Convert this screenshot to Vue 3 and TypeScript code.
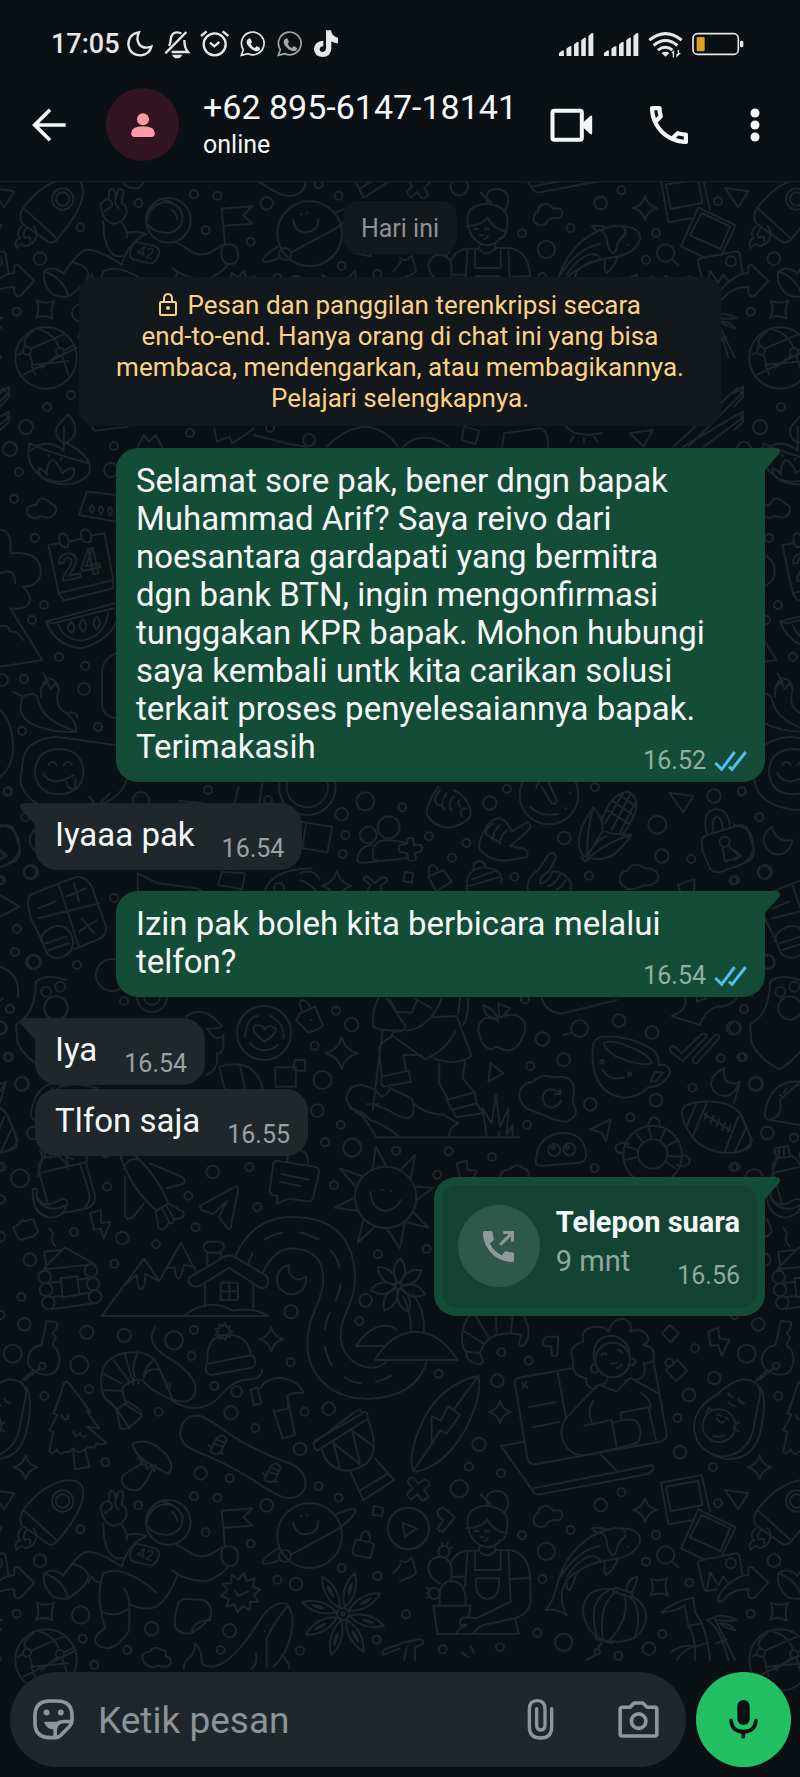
<script setup lang="ts">
interface Message {
  id: number
  side: 'in' | 'out'
  text: string
  time: string
  tail: boolean
}

const messages: Message[] = [
  {
    id: 1,
    side: 'out',
    text: 'Selamat sore pak, bener dngn bapak Muhammad Arif? Saya reivo dari noesantara gardapati yang bermitra dgn bank BTN, ingin mengonfirmasi tunggakan KPR bapak. Mohon hubungi saya kembali untk kita carikan solusi terkait proses penyelesaiannya bapak. Terimakasih',
    time: '16.52',
    tail: true,
  },
  { id: 2, side: 'in', text: 'Iyaaa pak', time: '16.54', tail: true },
  { id: 3, side: 'out', text: 'Izin pak boleh kita berbicara melalui telfon?', time: '16.54', tail: true },
  { id: 4, side: 'in', text: 'Iya', time: '16.54', tail: true },
  { id: 5, side: 'in', text: 'Tlfon saja', time: '16.55', tail: false },
]

/* ---------- wallpaper doodles ---------- */

type Dot = [number, number, number]

interface Sheet {
  transform: string
  paths: string[]
  dots: Dot[]
}

const star = (cx: number, cy: number, r: number): string => {
  const k = r * 0.2
  return `M${cx} ${cy - r}Q${cx + k} ${cy - k} ${cx + r} ${cy}Q${cx + k} ${cy + k} ${cx} ${cy + r}Q${cx - k} ${cy + k} ${cx - r} ${cy}Q${cx - k} ${cy - k} ${cx} ${cy - r}z`
}

const burst = (cx: number, cy: number, outer: number, inner: number, points: number): string => {
  const list: string[] = []
  for (let i = 0; i < points * 2; i++) {
    const r = i % 2 ? inner : outer
    const a = (Math.PI * (i + 0.5)) / points
    list.push(`${(cx + r * Math.sin(a)).toFixed(1)} ${(cy - r * Math.cos(a)).toFixed(1)}`)
  }
  return `M${list.join('L')}z`
}

const petals = (cx: number, cy: number, from: number, to: number, width: number, count: number, turn: number): string => {
  let d = ''
  for (let i = 0; i < count; i++) {
    const a = turn + (2 * Math.PI * i) / count
    const ux = Math.cos(a)
    const uy = Math.sin(a)
    const at = (r: number, w: number) => `${(cx + ux * r - uy * w).toFixed(1)} ${(cy + uy * r + ux * w).toFixed(1)}`
    const mid = (from + to) / 2
    d += `M${at(from, 0)}Q${at(mid, width)} ${at(to, 0)}Q${at(mid, -width)} ${at(from, 0)}z`
  }
  return d
}

const sheets: Sheet[] = [
  {
    transform: 'translate(0 1140) scale(.3333)',
    paths: [
      'M115 100L260 66V40M118 100Q110 70 130 55M118 100L145 195M258 66Q270 120 285 165Q288 200 250 208L190 218M240 72L268 160Q272 185 255 200M195 40L205 75M200 50l20 8M120 30q2 24 20 20',
      'M98 147h14l-3 20Q130 210 175 182Q195 170 202 185Q195 235 145 232Q95 220 98 147M110 175Q140 225 200 195',
      'M40 262l20-12 6-10 8 4 20-6 6 2 14 34-12 14-40 12q-12-8-22-38z',
      'M270 220l33-10v38l28-2-20 50-8-30-20 4z',
      'M362 50Q375 30 410 50Q480 120 505 190L470 212Q395 150 362 50zM372 88Q380 50 420 60M375 110V225Q380 245 400 230L432 190M450 70L545 110Q560 120 550 132L500 145M467 212L475 262Q485 275 495 265L505 250M505 190L550 215Q555 230 540 235L520 238M485 205L510 250Q525 250 522 235L500 200',
      'M600 198L706 140Q716 138 714 150L692 265Q684 270 680 262L657 230L682 182L640 222L603 210z',
      'M830 62l115 18q14 4 12 18L940 172q-4 14-18 12L868 176 830 190 832 168 820 166q-12-4-11-14L820 72q2-10 10-10zM845 103L927 119M840 126L900 138M862 62Q862 30 895 30Q925 30 925 75',
      'M1118 90L1127 20L1160 80M1085 108L1020 86L1065 138M1065 172L1005 203L1075 213M1090 240L1073 308L1122 262M1160 265L1200 325L1215 245M1200 92L1245 45L1232 120M1248 140L1300 143L1250 180M1238 215L1285 263L1215 245M1112 155Q1115 210 1157 212Q1190 210 1202 180M1146 149h2M1172 153h2',
      'M132 385L195 322L287 375M132 335l50-5M132 335L140 385M148 265q16 14 8 26q-4 10 10 28M132 388L262 375M152 428L180 426M234 420L262 414M158 470L186 468M238 462L268 458M155 507L290 489M182 415l50-6 6 55-50 8z',
      'M305 528L432 356L478 423L543 308L588 395M380 430L410 405q2 40 12 42q14-2 14-45L478 423L500 385L525 382Q525 415 537 415Q545 410 552 375L585 380M305 528H805M552 528Q620 470 700 512Q760 500 805 528',
      'M615 435V500M760 435V505M572 410L660 358Q688 335 716 358L800 408Q812 430 795 443Q785 448 775 440L687 383L600 438Q575 445 566 425Q564 415 572 410zM662 428h52v52h-52zM688 428v52M662 454h52M622 375V340M662 355V340M630 338Q608 335 611 318Q615 305 630 305H655Q672 306 672 320Q670 336 655 338z',
      'M708 345Q760 230 880 230Q1065 235 1065 420Q1065 460 1030 540Q1010 600 1040 645Q1075 685 1120 683Q1145 680 1160 665M788 400Q820 325 880 325Q970 330 970 420Q970 450 945 510Q905 600 935 680Q985 777 1105 777Q1250 770 1280 665',
      'M792 300q25-18 55-22M900 277q30 8 55 20M992 332q20 20 26 48M1022 432q-2 20-15 48M990 517q-12 25-15 50M975 620q5 30 20 55M1033 712q20 15 50 18M1128 725q25-5 45-18M757 340l-12 30',
      'M868 375A44 44 0 1 0 918 410Q885 430 868 400Q864 388 868 375z',
      'M1068 618H1150M1068 618Q1110 555 1160 557Q1180 558 1190 570M1125 660H1372Q1320 575 1245 575Q1170 580 1125 660z',
      'M1210 470Q1235 520 1233 575M1240 465Q1275 510 1272 578',
      petals(1195, 438, 8, 84, 34, 7, 0.3),
      'M140 543l30 3q4 6-2 20l-10 15 10 12-8 14q-4 12 6 16Q185 645 175 680Q165 708 130 704Q80 690 84 655Q90 620 125 615zM120 685L75 720M100 690L65 722',
      'M305 750Q290 640 400 637Q460 635 480 690L520 782Q470 760 440 735Q420 700 370 740Q365 765 380 790L350 806Q310 780 305 750M305 750L365 752M308 700L365 730M340 660L385 720M375 642L395 715M415 638Q390 680 405 710M465 660Q430 680 432 715M480 690Q440 680 432 715M385 715v18M400 715v18M415 718v14',
      'M465 562Q435 610 500 650Q600 710 585 760Q570 800 510 775M520 785Q600 830 660 770Q700 715 760 718Q785 710 787 690',
      'M620 672L750 646Q765 648 766 665Q766 680 755 683L632 705Q618 702 617 685Q617 675 620 672zM622 665Q620 590 672 585Q740 580 752 640',
      burst(671, 575, 26, 16, 9),
      star(814, 598, 36),
      'M752 750l20-8 12 48-22 6zM780 745Q800 710 850 715Q900 725 910 760Q880 755 862 768L865 806M165 812L192 730Q200 720 208 732L270 812',
    ],
    dots: [
      [1157, 172, 92], [134, 411, 19], [138, 449, 19], [145, 488, 19], [273, 392, 19], [279, 432, 19], [285, 470, 19],
      [127, 678, 10], [505, 738, 6], [710, 755, 16], [60, 115, 27], [5, 80, 12], [3, 178, 12], [317, 40, 12], [322, 140, 12],
      [638, 96, 19], [748, 81, 12], [975, 7, 12], [1057, 22, 27], [1188, 33, 12], [565, 167, 12], [1002, 136, 12],
      [772, 201, 12], [587, 262, 12], [222, 276, 12], [367, 294, 19], [90, 359, 19], [468, 313, 12], [343, 371, 12],
      [64, 471, 12], [0, 290, 15], [2, 525, 12], [1134, 343, 12], [1097, 481, 19], [1078, 543, 12], [873, 515, 20],
      [73, 553, 19], [260, 577, 20], [373, 586, 20], [522, 601, 27], [582, 570, 12], [575, 648, 12], [38, 641, 27],
      [238, 675, 27], [267, 748, 12], [133, 768, 12], [643, 738, 12], [872, 667, 12], [1280, 327, 12],
    ],
  },
  {
    transform: 'translate(400 1310) scale(.3333)',
    paths: [
      'M210 15Q180 50 188 105Q190 120 200 125Q195 150 225 160Q240 168 250 155L240 130Q250 90 290 75Q330 65 365 75Q352 100 362 108Q370 110 380 95Q395 60 370 15M190 62L250 100M225 15L270 88M287 0L290 72M340 0L332 72M200 125L240 130M210 15Q240-30 290-35Q340-30 370 15',
      'M475 80H440Q425 90 430 105Q440 112 455 108V135Q465 142 472 135z',
      'M590 235Q560 240 558 205Q510 195 520 150Q500 110 550 95Q540 55 585 50Q620 50 625 65Q640 20 675 28Q700 40 690 65Q735 50 745 85Q745 100 730 105Q770 110 760 150Q745 165 730 158Q745 200 710 210',
      'M582 150Q575 80 635 77Q690 85 690 145M580 162q-15 15 0 25q15 2 15-8M690 145q20 0 15 15q-10 10-20 5M632 160q8 3 18-2M650 175q10-2 14-10M605 135q8-8 14-2M652 120q10 0 14 8',
      'M622 205L618 220L590 228M690 205L650 245L600 225M675 212L695 205L778 252M515 175L355 203Q342 208 345 222L382 445Q388 465 405 463L780 395Q802 390 800 370L760 150M472 182L498 322M365 218l18 16M367 234l12-18M385 292l82-15M397 352l80-15',
      'M590 228L497 325Q475 360 490 395Q510 440 560 435L650 415M580 272Q560 300 575 335M552 347L635 330L650 412M635 340Q690 320 710 335Q730 360 715 395Q700 405 650 415M665 330L662 308L745 292L768 390M722 248Q755 270 752 295',
      'M372 395L303 408L400 545Q405 555 420 553L740 493Q765 485 758 465L400 535M600 430L652 485',
      'M235 198Q250 260 190 370Q120 480 40 485Q20 430 75 320Q130 220 235 198zM235 198L160 300M40 482L95 402V318L122 332L145 288L180 315L140 370L120 362L95 402',
      'M810 45L836 70L812 97L786 70zM925 65L955 53L958 85L988 90L965 138L955 105L932 108zM798 180L832 150L862 182L828 214z',
      'M1030 208Q1085 210 1080 260Q1070 300 1060 360Q1040 435 965 440Q885 425 882 350Q885 290 950 255Q990 215 1030 208zM1080 230Q1105 270 1080 370Q1060 445 990 447Q960 447 940 435M940 378q18 6 34-2M950 325q15 20 22 10M985 250q5 12 15 10M985 275q5 12 20 12M1015 265q5 15 18 14M950 316q8-4 14 2M975 322q8 2 10 8M918 310l8-16 10 6M1000 350l16-14M1002 356l14 8',
      star(300, 306, 34), star(735, 600, 36),
      'M40 503L55 520L75 508Q90 515 88 525L72 540L85 560Q75 575 65 570L52 552L35 568Q20 560 22 550L38 535L22 515Q30 500 40 503z',
      'M8 638L50 655L15 680zM112 605Q120 590 135 597L165 622L130 663Q118 668 113 655L130 630Q112 622 112 605z',
      'M262 585Q250 545 290 542Q325 545 325 580Q322 600 315 605M242 553l30 30M205 655Q190 590 262 587Q330 595 322 650Q318 690 300 692M205 655Q215 705 262 712Q290 710 300 690M198 655H205Q250 650 262 628Q280 665 320 670M222 665q8-5 14 0M255 665q8-5 12 0M240 680q5 4 12 0M252 693q10 0 12-10M240 710L235 722Q262 750 288 720L285 712',
      'M235 722H205Q165 725 152 760M288 720H330Q385 730 390 800L392 870Q390 910 345 925L250 945Q230 955 222 970M203 722L195 830M325 722L332 875L230 925L190 922Q175 930 182 945L200 945Q175 955 170 968M225 722V780H302V722M228 805H297V830Q290 867 262 867Q230 862 228 830zM330 808L392 803M155 800H195M345 925L357 972H112L100 887H212L205 922',
      'M120 885Q110 815 155 813Q200 815 197 885M120 820Q80 800 86 765Q95 740 120 740Q155 745 155 780Q155 810 150 815M126 706v-8M140 706l4-8M148 716l8-4M88 838l-8-4M86 850h-8M88 860l-8 4',
      'M402 640Q398 615 415 610Q412 592 435 588Q455 590 460 603Q485 595 487 615Q485 635 460 630Q440 635 437 648Q415 658 402 640z',
      'M435 900Q460 880 475 810Q520 680 640 655Q720 650 720 690Q715 730 655 745Q550 760 500 810Q470 860 500 915Q475 895 435 900zM590 668L575 655Q600 650 622 660M475 810Q530 720 600 708M600 665Q625 680 622 710Q640 755 650 720Q650 700 675 680Q680 665 670 658M655 745Q640 780 620 795Q610 790 615 757M500 820Q500 842 510 840Q525 810 530 790Q560 760 600 755Q600 735 565 740Q530 755 500 800M683 710h2',
      'M645 833L700 850L692 862L640 845zM680 842Q680 805 712 800Q712 815 695 848M640 838Q550 830 549 905Q560 970 610 990Q660 1005 710 980Q755 930 730 890Q715 865 692 858M650 845Q595 880 608 988M672 852Q695 920 625 995M630 840Q560 870 590 975M690 860Q730 900 705 980M585 975L590 988L635 1000L642 992M605 998L592 1018M592 1033L560 1050',
      'M783 518L905 495L930 605M783 518L805 643L880 630M798 530L895 513L907 585L812 603zM895 598L1007 652L965 740M895 598L843 715L915 750M905 615L990 655L962 723L870 682zM895 765Q890 755 905 750L1010 730Q1020 732 1020 745L1028 795M895 765L912 838Q920 848 935 840L950 838M920 842L930 788L955 825L970 800L985 818',
      'M955 875Q950 840 1020 800Q1035 795 1045 795V775Q1055 765 1065 780L1105 818L1065 862Q1050 870 1045 855V838Q1010 835 985 855Q965 880 955 875z',
      'M975 540L1045 550L1015 598zM817 755l18 18M752 806Q777 818 802 804Q790 830 804 856Q777 845 752 856Q765 830 752 806z',
      'M785 907Q820 875 880 863L885 905L905 940L865 948L855 890M785 907Q830 905 855 885M865 945Q890 990 885 1050M905 940Q925 990 930 1050M920 930Q960 950 985 1050M945 925Q970 980 1005 1050M920 930L945 922M950 918Q980 915 1010 930Q980 935 955 930M960 940Q990 940 1005 960Q975 955 960 940M815 1025Q850 1000 880 1010Q850 1020 830 1050M885 1010L925 998M950 1000l30-12',
      'M0 750Q20 765 35 742L48 785Q45 800 20 805L0 815M185 1028l20 14M212 1008l10 22M0 1000l60-12q14 2 8 14L45 1012V1050M20 1010l-8 40',
    ],
    dots: [
      [638, 150, 52], [808, 158, 12], [957, 347, 49], [25, 655, 62], [132, 725, 17], [103, 850, 17], [592, 1025, 8], [993, 760, 15],
      [304, 127, 12], [386, 152, 12], [292, 212, 19], [116, 191, 12], [237, 403, 20], [207, 470, 12], [303, 490, 12],
      [178, 536, 26], [885, 115, 12], [867, 255, 19], [832, 324, 12], [840, 427, 19], [939, 471, 12], [943, 204, 19],
      [664, 547, 12], [602, 585, 19], [512, 660, 12], [366, 676, 12], [439, 724, 26], [768, 675, 12], [738, 755, 12],
      [954, 580, 12], [868, 818, 12], [427, 807, 12], [412, 969, 12], [491, 997, 26], [787, 972, 12], [747, 1016, 19],
      [655, 1037, 12], [18, 913, 12], [128, 1018, 12], [300, 1012, 12], [797, 735, 26],
    ],
  },
  {
    transform: 'translate(0 1400) scale(.3333)',
    paths: [
      'M820 30L848 115L885 105L862-12M822 35L865 25',
      'M175 0L160 40 172 45 148 90 160 95 148 155Q160 165 170 148Q180 170 195 155Q210 160 220 145Q235 165 250 150Q260 145 270 140Q285 150 290 130Q305 135 320 130L262 80 298 85 260 35 270 38L245 0M220 155L225 208L268 200L255 150M185 45q5 18 20 10v-12M220 95q8 25 20 5q10 20 20 5',
      star(77, 202, 36),
      'M93 752L190 710M55 770L70 762M94 800L105 830M88 768L98 800M98 800L205 790M100 700Q60 730 80 745M105 692Q160 700 178 750M192 758L222 742M70 830L230 750M125 810L172 772M186 772L205 830',
      'M70 330Q55 350 65 375L145 432Q160 438 175 420Q260 320 248 265Q240 235 190 242Q120 260 70 330zM70 330L172 422M65 385Q45 405 60 420Q40 430 50 450Q65 430 75 445Q105 440 110 410Q110 395 100 385M80 390Q65 410 75 420Q95 410 90 430',
      'M398 130Q450 110 500 165Q525 200 505 222Q490 215 430 180Q400 155 398 130zM425 190L370 225Q360 240 372 258Q390 275 415 270Q440 250 455 210M412 175l15 8-8 12 18-2 4 15 14-12 8 18 4-20',
      'M540 105Q545 40 600 48Q625 55 700 110Q780 160 870 190Q925 215 915 265Q895 305 845 290Q810 275 760 240Q680 190 585 152Q545 135 540 105z',
      'M632 150L652 112Q668 98 680 118L662 158Q645 168 632 155zM640 130l30 10M648 118l28 10M626 136l12 8M658 158l12 4M794 234L814 196Q830 182 842 202L824 242Q807 252 794 239zM802 214l30 10M810 202l28 10M788 220l12 8M820 242l12 4',
      'M325 0Q345 20 350 30L362 88L385 85L425 50Q425 30 410 22L375 0M350 30L378 8M375 12L425 45M352 30L388 85',
      'M940 130L1070 32Q1085 28 1085 38L1098 35Q1112 55 1095 62L955 150Q945 155 940 130zM945 122L1085 42M965 148Q980 205 1035 212Q1075 210 1100 190Q1140 150 1105 60M1000 125L1020 208M1000 130L1080 192L1057 92L1122 140M1050 212L1090 300L1182 240L1125 175M1080 272L1165 220',
      'M305 335Q295 320 310 310Q320 300 325 305L328 280Q335 265 345 280L348 300L355 275Q370 268 370 285L365 315Q380 320 380 345Q370 375 340 377Q310 370 305 335zM325 305q14 2 10 20l-20 14M348 300q-8 14 8 30',
      'M440 375Q445 320 495 312Q545 318 548 358Q545 400 500 405Q455 402 440 375M480 303Q530 310 548 350M515 335Q530 345 532 365',
      'M310 370Q310 460 350 475H372M365 375Q385 400 380 420M380 405Q410 398 440 408Q385 430 365 500Q300 455 260 455Q235 460 190 527Q160 500 133 520Q125 560 160 590Q180 600 205 595Q260 560 265 530Q260 500 215 492M133 520Q190 540 205 595M265 548L275 530Q285 545 300 548M300 610Q295 560 310 520Q340 505 380 520Q430 540 468 577M372 565Q390 590 388 630V690Q360 740 320 745Q285 740 285 718Q290 700 315 685Q305 650 300 610M305 635Q345 655 388 625M388 612Q430 635 470 620Q510 590 532 525M518 512Q560 545 620 543Q660 530 685 500M525 432Q560 450 575 462Q610 480 645 455L668 440',
      'M668 445Q690 430 710 450Q720 480 705 495Q680 505 668 485Q660 465 668 445zM675 438L665 332L757 325L730 352L757 377L672 383',
      'M412 432L460 443Q480 450 478 465L470 483Q462 498 445 495L402 485Q386 478 390 462L396 446Q402 430 412 432z',
      'M560 597L610 600Q640 615 632 650Q620 670 575 700Q540 705 525 680Q522 650 535 610Q545 595 560 597zM575 700Q580 660 632 660',
      burst(722, 578, 60, 40, 10),
      'M705 572l10 16 30-14',
      'M1003 345Q1060 320 1068 330Q1065 350 1010 390L875 463M838 443Q785 475 788 490Q800 495 835 482M880 367Q885 403 918 403Q955 400 955 363M902 349h2M920 345h2',
      'M1068 418L1115 428Q1122 432 1120 440L1112 475L1062 465Q1056 460 1058 450zM1083 420Q1082 393 1098 394Q1114 398 1108 425M1122 318l28 6-4 24-28-4z',
      petals(1029, 642, 20, 128, 32, 8, 0.28),
      petals(1029, 642, 60, 95, 5, 8, 0.28),
      'M780 660Q820 600 860 612Q885 640 875 690Q865 760 820 800M862 620Q820 670 800 715V800M780 660Q700 790 640 800Q600 800 605 780Q605 750 585 730Q585 765 565 775Q550 790 552 806M767 760Q775 790 755 806M845 765Q870 790 868 806M794 692v2',
      'M430 785Q420 755 450 755Q460 735 485 750Q505 750 495 768Q520 775 510 795Q495 805 475 797Q450 810 430 785z',
      'M110 608Q134 620 163 608Q150 635 158 662Q134 648 108 660Q122 635 110 608z',
      'M1150 765l50-20M1150 765q-6-14 6-18l44-14M1180 520q20-20 22-30',
    ],
    dots: [
      [188, 303, 32], [188, 303, 20], [505, 367, 67], [929, 407, 97], [855, 468, 18], [1029, 642, 18], [1029, 642, 5], [138, 780, 92],
      [81, 758, 12], [180, 762, 12], [476, 35, 12], [693, 38, 20], [766, 84, 12], [914, 35, 12], [986, 26, 19], [900, 147, 19],
      [602, 220, 19], [689, 235, 12], [956, 259, 12], [1016, 293, 12], [316, 187, 12], [415, 316, 12], [582, 289, 12],
      [652, 293, 12], [800, 316, 19], [241, 388, 12], [617, 397, 12], [752, 431, 12], [120, 482, 19], [832, 539, 12],
      [888, 552, 19], [1025, 504, 12], [1132, 528, 12], [50, 641, 12], [242, 645, 26], [455, 686, 20], [689, 692, 20],
      [248, 716, 12], [382, 750, 12], [662, 750, 12], [900, 752, 12], [1130, 719, 12], [283, 795, 12],
    ],
  },
  {
    transform: 'translate(300 780) scale(.3333)',
    paths: [
      'M0 125L97 140L82 217L8 205L18 128M0 280Q40 262 60 300M0 300Q30 310 50 335',
      'M415 20Q380 70 380 100Q400 145 455 142Q515 125 512 95Q505 50 460 30M412 75Q396 58 420 30M435 88Q415 75 440 40M412 75q14 0 22 12M455 90Q440 75 460 50M480 80Q470 65 480 60M485 108Q475 85 500 85',
      'M710 25Q705 10 730 0M725 20L755 70Q770 75 770 60L745 5M809 39h3M795 85h3M690 80Q720 112 775 102',
      'M880 82Q830 150 838 200Q842 230 862 232Q900 245 940 225Q965 205 995 165Q950 165 915 155M880 82Q915 120 908 155Q890 180 865 225M880 82Q860 150 862 225M862 225Q890 180 920 168M845 232l10 12 12-8M995 165Q930 180 870 230M905 125Q930 40 985 35Q1015 50 1008 90Q990 140 970 158M920 90L985 130M940 65L1000 105M960 45L1008 80M990 45L935 150M970 40L915 130M1005 70L960 158',
      'M555 150Q530 190 540 210Q580 250 630 240L680 232Q690 210 665 205L630 198Q680 160 692 140Q690 120 675 130L635 155Q620 120 600 115Q570 115 555 150M560 165Q550 150 580 130M560 165q10 2 18 13M580 178Q575 160 600 135M580 178q10 0 20 14M600 190Q600 170 620 150',
      'M683 335Q680 290 715 270L745 225Q765 210 768 235L745 275Q720 290 720 310M755 275Q790 270 815 310L810 335M720 310q18 4 35-30M745 318q20-4 36-36M770 328q14-4 28-28',
      'M172 240Q175 200 215 195M220 235Q210 180 265 180Q310 185 318 190M172 240Q175 250 190 248L320 235M220 235q0 8 12 6',
      'M322 180Q325 170 340 175L342 195L362 195Q372 205 362 215L345 220L348 238Q335 248 325 240L322 220L300 215Q292 205 300 195L320 192z',
      'M1205 185Q1205 170 1220 165L1320 135Q1335 135 1342 145L1362 205Q1365 230 1345 245L1265 275Q1240 280 1230 265L1208 215zM1220 160Q1205 95 1245 88Q1285 85 1290 140M1240 155Q1235 112 1250 110Q1265 112 1268 145M1268 199L1275 245L1318 230L1284 196',
      'M1415 140Q1385 165 1392 190Q1410 230 1445 222Q1475 210 1477 180Q1430 190 1415 140z',
      'M960 305Q955 275 982 272Q1000 240 1035 265Q1075 265 1075 295Q1065 320 1030 315Q985 345 960 305zM1108 38L1180 48L1150 97z',
      'M385 290L430 270L455 305L408 334zM388 284Q380 255 400 255Q412 260 415 275M500 320Q500 265 555 262Q600 270 603 290L500 320q-2 10 10 15M603 290q5 10 0 18M520 268q0-25 20-25q18 5 15 20M515 298L590 272M315 275l25 5-5 28-25-5z',
      star(110, 318, 45),
      'M200 335L212 315L190 298Q195 285 205 292L225 310L245 292Q262 290 262 303L240 318L248 335M1133 315L1183 298V335M1133 315l8 20',
      'M235 655Q215 690 220 740Q240 755 310 750Q320 740 315 735L260 655M270 660L290 695L335 698L352 660M345 655L395 685M425 655Q400 720 350 745L318 752M395 712L470 708L515 828Q470 860 400 835M480 655L475 700M505 655Q505 715 490 735M465 755Q440 810 375 838L275 765Q280 750 305 755M248 750L218 990M200 973H235M275 770Q235 790 238 810L245 890M310 825L318 872M310 825H365M245 890L325 872L333 905L250 920Q240 915 245 890z',
      'M418 850V910L445 960M495 842L488 895L525 938M440 960L525 937L530 970L455 990zM458 992L468 1010M530 970L550 1000L470 1012M270 922Q265 945 245 950Q220 920 185 915Q140 915 140 960Q150 990 190 1010L230 1072M270 925L335 955Q350 1000 330 1012Q310 1020 265 990L225 975M340 970Q370 1000 430 1005L475 1030Q445 1045 448 1070M550 1000L560 1070M150 985Q190 995 210 1020Q250 1030 300 1072M228 1072H658M560 1070L548 985L575 1030L588 945L600 1040L625 985L620 1065L638 1035V1068M598 1055V1070',
      'M592 720Q540 700 535 750Q545 805 575 808Q590 795 600 805Q630 820 650 800Q680 765 675 730Q655 690 600 712M595 725Q590 690 550 675Q550 710 590 715M597 712L595 670L630 685L605 712',
      'M878 800Q885 770 910 770Q990 765 1060 810Q1080 830 1075 855Q1110 850 1110 880Q1090 920 1045 922Q1020 950 970 953Q870 940 878 800zM912 790Q920 780 960 790Q1050 820 1055 850Q1020 860 950 830Q910 805 912 790zM908 868Q925 905 972 892M1050 905L1065 875L1088 878L1070 903z',
      'M790 766l25-8M1112 815Q1105 800 1122 798L1145 820L1205 762Q1220 758 1220 770L1148 843zM1180 835L1245 765Q1260 762 1257 775L1190 850Q1175 852 1180 835z',
      'M1272 865Q1235 880 1233 915Q1245 950 1280 948Q1310 940 1315 908Q1265 920 1272 865z',
      'M700 905Q720 880 760 892Q825 880 822 940Q815 960 822 975Q840 1010 800 1025Q770 1025 730 1005L680 985Q650 960 660 930Q675 905 700 905zM775 935Q740 915 728 950Q730 985 760 982Q780 975 782 962M765 942L782 942 780 928',
      'M572 850L610 880L565 905zM932 1018L870 1048L905 1058L918 1085z',
      'M1145 995Q1150 970 1200 965Q1290 960 1320 1000Q1355 1060 1352 1100Q1330 1120 1270 1118Q1200 1110 1170 1060Q1145 1020 1145 995zM1190 968L1160 1040M1222 965L1180 1065M1315 1010L1275 1115M1340 1040L1305 1115M1210 1000L1290 1050M1222 998l-8 20M1240 1008l-8 20M1258 1018l-8 22M1275 1028l-8 22M1292 1035l-8 20',
      'M708 1145Q710 1060 795 1058Q860 1065 858 1130Q855 1145 840 1148L725 1157Q705 1158 708 1145z',
      'M1045 1040Q1048 1010 1065 1012Q1085 1020 1078 1042M965 1120Q940 1115 950 1095Q965 1085 985 1092M1148 1125Q1175 1130 1168 1150Q1150 1165 1130 1155M1045 1040L1055 1078M1095 1050L1080 1082M1132 1080L1100 1100M1143 1130L1104 1128M1010 1062L1030 1088M980 1100L1015 1110M972 1140L1015 1132M1125 1165L1098 1146',
      'M1500 905Q1410 900 1395 1000Q1395 1020 1410 1020L1500 1035M1500 905L1440 960Q1450 1010 1412 1018M1460 925l-8 14M1440 945l10 8M1425 1105L1465 1098L1470 1130L1430 1135zM1437 1104v28M1452 1102v28M1430 1135L1415 1190M1470 1125Q1500 1140 1505 1165',
      'M725 655Q740 700 790 700L950 660M1155 655Q1165 690 1115 708L1200 735Q1215 690 1250 680Q1290 680 1310 655M1190 655v10l30-10',
      'M1410 605Q1440 580 1500 600M1410 605Q1410 700 1350 735L1355 790Q1380 840 1440 868Q1500 830 1540 760',
      star(125, 820, 48),
      'M0 700L45 680L68 735Q68 745 25 758L-12 720zM5 690Q-8 662 8 660Q28 665 32 685M32 719h3',
      'M470 1150L500 1143L503 1170L532 1172L515 1200M470 1150l12 50M600 1200Q598 1170 630 1168Q650 1145 670 1165Q690 1170 685 1190',
    ],
    dots: [
      [22, 20, 85], [22, 20, 62], [747, 45, 88], [205, 165, 25], [266, 142, 33], [1274, 185, 15], [906, 845, 5], [989, 882, 5], [839, 746, 25],
      [763, 1110, 18], [808, 1108, 18], [760, 1102, 5], [803, 1102, 5], [1058, 1125, 88], [1058, 1122, 44], [1441, 635, 15], [1483, 620, 15],
      [1470, 684, 35], [125, 103, 19], [196, 64, 27], [307, 82, 12], [136, 166, 12], [387, 169, 12], [128, 222, 12],
      [456, 233, 12], [499, 189, 12], [569, 69, 20], [621, 26, 12], [793, 174, 19], [885, 22, 12], [1072, 134, 27],
      [1242, 48, 20], [1325, 35, 12], [1378, 112, 12], [1086, 228, 20], [1174, 237, 12], [643, 290, 12], [867, 287, 12],
      [1300, 302, 12], [1392, 277, 19], [1405, 546, 20], [108, 692, 12], [155, 734, 20], [44, 797, 12], [67, 900, 27],
      [52, 992, 19], [122, 1034, 12], [75, 1086, 12], [156, 1104, 27], [289, 1112, 12], [446, 1114, 12], [412, 1184, 12],
      [576, 1131, 12], [681, 1034, 12], [727, 777, 20], [791, 839, 19], [691, 859, 12], [675, 658, 12], [957, 722, 19],
      [1056, 758, 19], [1068, 961, 19], [871, 973, 19], [991, 1012, 12], [1177, 923, 12], [1262, 835, 12], [1324, 832, 12],
      [1367, 911, 19], [1300, 744, 20], [1332, 687, 12], [1402, 1059, 19], [1482, 1073, 12], [1300, 1161, 12], [884, 1164, 12],
    ],
  },
  {
    transform: 'translate(0 180) scale(.51 .3333)',
    paths: [
      'M125 790Q105 770 112 740Q130 705 135 705Q150 730 147 760Q140 785 125 790M125 740V810M60 812Q90 770 125 812M0 640L18 620V650L0 680M0 710L18 695V725L0 750',
      'M1320 800L1445 625L1455 640L1350 800M1340 800L1450 700L1455 715L1380 800M1235 760L1280 750L1262 800zM910 740L940 752L932 792L905 780z',
      'M985 800L988 760L1060 745Q1075 750 1075 800M1110 740Q1130 775 1180 760M1145 775v14M1125 770l-6 14M1165 770l6 14M420 745L425 785L450 770L455 790L485 760L498 745M498 765L560 790L600 800',
      'M180 740L185 752L250 740M270 800L282 765L292 785L305 765L318 800M640 800Q680 740 720 740Q760 750 780 800M790 800Q830 745 880 800',
    ],
    dots: [],
  },
  {
    transform: 'translate(0 440) scale(.51 .3333)',
    paths: [
      'M58 10Q45 80 95 125Q150 150 175 100Q185 50 125 5M58 10Q100 40 175 70M75 85Q75 125 120 125Q150 120 145 85Q130 85 122 100Q112 60 100 60Q90 80 92 105Q85 88 75 85M95 45v4M120 55v4',
      'M55 225Q48 195 70 195Q80 160 100 190Q115 200 108 220Q100 240 80 228Q65 240 55 225zM230 165L170 155L155 225L230 245M180 195q8 12 0 25q-8-12 0-25M198 198q8 12 0 25q-8-12 0-25M216 201q8 12 0 25q-8-12 0-25',
      'M118 310L95 315L115 460L222 420L205 280L182 286M118 310Q112 280 125 280Q138 290 133 320Q120 325 118 310M160 295Q155 268 168 268Q182 275 178 305Q165 312 160 295M135 305L160 296M115 460L125 482L222 445V420',
      'M90 545L225 490M90 545Q110 620 160 625Q215 600 228 545M90 545L105 550L222 505M115 555Q125 600 160 602Q205 590 212 520M140 545q-14 20 0 34q12-14 0-34M163 538q-14 20 0 38q12-18 0-38M190 530q-14 20 0 38q12-18 0-38',
      'M0 270Q25 270 20 340Q80 330 80 400Q75 440 45 440Q70 480 50 500Q35 510 20 505M0 400Q30 380 30 430M20 505L83 660L0 680M0 560Q15 550 20 575Q35 570 45 600',
      'M25 755L45 770Q70 750 75 780Q80 840 150 875Q150 840 130 820Q105 800 115 750Q115 720 95 715Q80 725 80 770M45 770Q30 820 60 850Q100 880 150 875M85 700l10 25M80 745l12-20 8 22 8-18 8 18M130 820q22-8 22 15',
      'M228 640Q205 650 200 690V800Q205 830 228 835M225 915L110 890Q50 900 45 960L40 1015M85 1000Q100 1045 145 1005M95 975q8-20 16 0M125 975q8-20 16 0M0 810Q28 850 25 940Q20 990 0 1010',
      'M68 995Q72 928 116 927Q160 928 164 995Q160 1062 116 1063Q72 1062 68 995zM130 1025q2 25 18 22v-30',
    ],
    dots: [],
  },
  {
    transform: 'translate(0 780) scale(.51 .3333)',
    paths: [
      'M40 0Q45 75 120 90Q230 90 248 0M175 50l15 30 25-40M350 62L400 70M0 135Q40 140 38 210Q30 250 0 262M0 210l14 18L0 240',
      'M58 345L150 290Q170 290 180 320L208 440Q210 470 190 480L145 508M58 345Q50 370 62 420L85 490Q90 535 115 533Q145 525 143 480Q135 430 105 440Q80 455 80 485M115 315L155 500M75 415L195 370M75 385L108 365M130 350L168 325M145 310L155 365M155 455L190 420M160 415L185 460M90 490L130 470M95 510L135 490',
      'M0 345L38 380L0 410M0 560Q40 580 35 650M365 710Q400 670 435 740Q420 750 405 745Q425 790 438 765V800Q435 825 425 820Q430 870 405 885M430 860Q500 830 515 925M430 860L440 925M470 850L480 925',
      'M518 785Q485 745 503 735Q518 735 518 750Q525 730 540 745Q545 760 518 785M480 770Q485 710 505 708M530 708Q558 730 556 775M490 790Q515 830 545 795',
      'M540 862H580V920H540zM575 868L578 840H598V872H580M435 275L480 280L475 328L428 315zM270 332V280L310 310L385 325L395 332M520 332Q530 270 610 265',
      'M0 912L12 905L0 970M12 1000L35 1080Q30 1110 0 1118M118 920Q150 905 190 925M468 20L460 68M515 0L508 75',
    ],
    dots: [],
  },
  {
    transform: 'translate(0 0)',
    paths: [],
    dots: [
      [71, 395, 4], [47, 407, 4], [26, 427, 7], [114, 446, 4], [190, 433, 4], [270, 428, 4], [309, 440, 6],
      [19, 472, 4], [14, 499, 4], [35, 538, 4], [44, 605, 4], [32, 620, 4], [59, 657, 4], [85, 666, 4], [24, 679, 4],
      [84, 689, 6], [98, 727, 4], [22, 731, 4], [111, 470, 7], [10, 449, 7], [2, 680, 6],
      [141, 800, 8], [208, 790, 4], [31, 872, 7], [1, 880, 4], [114, 898, 4], [17, 929, 4], [33, 962, 7], [15, 952, 4],
      [77, 965, 4], [10, 1009, 4], [124, 1001, 4], [9, 1057, 4], [22, 1084, 7], [1, 1028, 6], [268, 800, 4], [8, 791, 4],
      [105, 1153, 4], [264, 1033, 27], [152, 997, 15], [152, 997, 8], [112, 975, 16], [279, 888, 5],
    ],
  },
]

const tileWidth = 734
const tileHeight = 1302
const tiles = [-1, 0].flatMap((row) => [-1, 0, 1].map((col) => ({ key: `${row}:${col}`, x: col * tileWidth, y: row * tileHeight })))
</script>

<template>
  <main class="app">
    <svg class="wallpaper" aria-hidden="true">
      <defs>
        <g id="doodles">
          <g v-for="sheet in sheets" :key="sheet.transform" :transform="sheet.transform">
            <path v-for="(d, i) in sheet.paths" :key="i" class="ink" :d="d" />
            <circle v-for="(dot, i) in sheet.dots" :key="'c' + i" class="ink" :cx="dot[0]" :cy="dot[1]" :r="dot[2]" />
          </g>
          <text class="ink-solid" x="137" y="1559" transform="rotate(14 144 1554)">42</text>
          <text class="ink-open" x="59" y="577" transform="rotate(-12 80 566)">24</text>
        </g>
      </defs>
      <use v-for="tile in tiles" :key="tile.key" href="#doodles" :x="tile.x" :y="tile.y" />
    </svg>

    <header class="top">
      <div class="status">
        <time class="clock">17:05</time>
        <div class="status-left">
          <svg viewBox="377 90 84 84" class="glyph" aria-hidden="true">
            <path class="line7" d="M416 97Q384 102 384 134Q388 166 422 166Q448 162 453 140Q430 148 417 134Q406 118 416 97z" />
          </svg>
          <svg viewBox="488 90 84 84" class="glyph" aria-hidden="true">
            <path class="line7" d="M506 138Q511 130 511 118Q514 97 530 97Q538 97 543 101M552 120Q552 144 563 156H514M495 160L558 96" />
            <path class="solid" d="M515 164H546Q541 175 530 175Q520 175 515 164z" />
          </svg>
          <svg viewBox="599 90 84 84" class="glyph" aria-hidden="true">
            <circle class="line7" cx="643" cy="133" r="33" />
            <path class="line7" d="M602 108L619 94M684 108L667 94M629 128l13 11 15-13" />
          </svg>
          <svg v-for="n in 2" :key="n" viewBox="711 90 84 84" class="glyph" :class="{ dim: n === 2 }" aria-hidden="true">
            <path class="line5" d="M724 166L730 149A34 34 0 1 1 744 161z" />
            <path class="solid" d="M745 117q4-4 7 0l4 9-4 6q5 9 13 12l5-6 9 5q3 4-1 8-8 7-23-3-17-13-15-24 1-5 5-7z" />
          </svg>
          <svg viewBox="934 90 84 84" class="glyph" aria-hidden="true">
            <path class="solid" d="M979 91H994Q997 111 1015 113V130Q1003 130 995 124V146Q993 171 968 171Q944 169 943 147Q945 123 971 122V139Q960 140 960 148Q961 156 969 156Q978 155 979 145z" />
          </svg>
        </div>
        <div class="status-right">
          <svg v-for="n in 2" :key="n" viewBox="472 95 110 74" class="signal" aria-hidden="true">
            <path class="solid" d="M475 167V158L485 150H490V167zM498 167V144L508 137H513V167zM521 167V132L530 124H535V167zM543 167V119L552 111H557V167zM565 167V106L574 98H580V167z" />
          </svg>
          <svg viewBox="740 92 106 80" class="wifi" aria-hidden="true">
            <path class="line9" d="M744 119Q793 79 842 119M757 135Q793 105 829 135M770 149Q793 132 814 149" />
            <path class="solid" d="M781 158Q793 150 805 158L793 169zM811 157l8-8v22h-4v-12zM830 149v12h-4v10l14-13h-6v-9z" />
          </svg>
          <svg viewBox="877 96 156 70" class="battery" aria-hidden="true">
            <rect class="line5" x="880" y="100" width="136" height="62" rx="14" />
            <rect x="891" y="110" width="24" height="43" rx="4" fill="#e29d22" />
            <rect class="solid" x="1021" y="121" width="10" height="20" rx="4" />
          </svg>
        </div>
      </div>

      <div class="bar">
        <button class="icon-btn back" aria-label="Kembali">
          <svg viewBox="97 323 100 100" aria-hidden="true"><path d="M196 373H106M150 328L105 373L150 418" fill="none" stroke="currentColor" stroke-width="11" /></svg>
        </button>
        <div class="avatar">
          <svg viewBox="392 338 72 72" aria-hidden="true">
            <circle cx="428" cy="357" r="18" />
            <path d="M393 402Q390 378 428 378Q466 378 463 402Q462 410 454 410H402Q394 410 393 402z" />
          </svg>
        </div>
        <div class="who">
          <h1>+62 895-6147-18141</h1>
          <p>online</p>
        </div>
        <button class="icon-btn video" aria-label="Panggilan video">
          <svg viewBox="450 322 128 102" aria-hidden="true">
            <rect x="457" y="330" width="88" height="87" rx="5" fill="none" stroke="currentColor" stroke-width="12" />
            <path d="M548 366L570 346Q576 342 576 350V396Q576 404 570 400L548 380z" fill="currentColor" />
          </svg>
        </button>
        <button class="icon-btn call" aria-label="Panggilan suara">
          <svg viewBox="3 3 18 18" aria-hidden="true">
            <path fill="currentColor" d="M6.54 5c.06.89.21 1.76.45 2.59l-1.2 1.2c-.41-1.2-.67-2.47-.76-3.79h1.51m9.86 12.02c.85.24 1.72.39 2.6.45v1.49c-1.32-.09-2.59-.35-3.8-.75l1.2-1.19M7.5 3H4c-.55 0-1 .45-1 1 0 9.39 7.61 17 17 17 .55 0 1-.45 1-1v-3.49c0-.55-.45-1-1-1-1.24 0-2.45-.2-3.57-.57-.1-.04-.21-.05-.31-.05-.26 0-.51.1-.71.29l-2.2 2.2c-2.83-1.45-5.15-3.76-6.59-6.59l2.2-2.2c.28-.28.36-.67.25-1.02C8.7 6.45 8.5 5.25 8.5 4c0-.55-.45-1-1-1z" />
          </svg>
        </button>
        <button class="icon-btn more" aria-label="Opsi lainnya">
          <svg viewBox="0 0 10 34" aria-hidden="true"><circle cx="5" cy="5" r="4.5" /><circle cx="5" cy="17" r="4.5" /><circle cx="5" cy="29" r="4.5" /></svg>
        </button>
      </div>
    </header>

    <section class="chat">
      <p class="day">Hari ini</p>
      <p class="notice">
        <svg class="lock" viewBox="0 0 18 23" aria-hidden="true">
          <rect x="1" y="9" width="16" height="13" rx="1" fill="none" stroke="currentColor" stroke-width="2" />
          <path d="M5 9V6Q5 1 9 1Q13 1 13 6V9" fill="none" stroke="currentColor" stroke-width="2" />
          <circle cx="9" cy="15" r="2" fill="currentColor" />
        </svg>
        Pesan dan panggilan terenkripsi secara <span class="unbroken">end-to-end.</span> Hanya orang di chat ini yang bisa membaca, mendengarkan, atau membagikannya. Pelajari selengkapnya.
      </p>

      <article v-for="m in messages" :key="m.id" class="bubble" :class="[m.side, { tailed: m.tail }]">
        <svg v-if="m.tail" class="tail" viewBox="0 0 15 22" aria-hidden="true"><path d="M0 0H11Q17 1 14 6L0 22z" /></svg>
        <p class="text">{{ m.text }}</p>
        <div class="meta">
          <time>{{ m.time }}</time>
          <svg v-if="m.side === 'out'" class="ticks" viewBox="0 0 99 66" aria-label="Dibaca">
            <path d="M4 39L23 58L62 6M45 50L54 58L95 6" />
          </svg>
        </div>
      </article>

      <article class="bubble out tailed call-card">
        <svg class="tail" viewBox="0 0 15 22" aria-hidden="true"><path d="M0 0H11Q17 1 14 6L0 22z" /></svg>
        <div class="call-inner">
          <div class="call-icon">
            <svg viewBox="3 3 18 18" aria-hidden="true">
              <path fill="currentColor" d="M20.01 15.38c-1.23 0-2.42-.2-3.53-.56-.35-.12-.74-.03-1.01.24l-1.57 1.97c-2.83-1.35-5.48-3.9-6.89-6.83l1.95-1.66c.27-.28.35-.67.24-1.02-.37-1.11-.56-2.3-.56-3.53 0-.54-.45-.99-.99-.99H4.19C3.65 3 3 3.24 3 3.99 3 13.28 10.73 21 20.01 21c.71 0 .99-.63.99-1.18v-3.45c0-.54-.45-.99-.99-.99z" />
              <path fill="none" stroke="currentColor" stroke-width="1.8" d="M13 11L20 4M14.8 3.9H20.1V9.2" />
            </svg>
          </div>
          <div class="call-info">
            <h2>Telepon suara</h2>
            <div class="call-row">
              <p>9 mnt</p>
              <time>16.56</time>
            </div>
          </div>
        </div>
      </article>
    </section>

    <form class="composer" @submit.prevent>
      <div class="field">
        <button type="button" class="icon-btn" aria-label="Stiker">
          <svg class="sticker" viewBox="98 150 124 124" aria-hidden="true">
            <path fill="none" stroke="currentColor" stroke-width="11" d="M165 267H150Q104 267 104 222V200Q104 156 150 156H170Q216 156 216 200V215Q216 225 208 233L183 259Q175 267 165 267V247Q166 218 192 218H216" />
            <circle cx="139" cy="191" r="9" fill="currentColor" /><circle cx="182" cy="191" r="9" fill="currentColor" />
            <path fill="currentColor" d="M131 219H180Q165 226 163 243Q138 242 131 219z" />
          </svg>
        </button>
        <input type="text" placeholder="Ketik pesan" aria-label="Ketik pesan" />
        <button type="button" class="icon-btn" aria-label="Lampirkan">
          <svg class="clip" viewBox="380 147 81 123" aria-hidden="true">
            <path fill="none" stroke="currentColor" stroke-width="10" stroke-linecap="round" d="M454 176V230Q454 264 421 264Q387 264 387 230V178Q387 152 411 152Q434 152 434 178V226Q434 240 421 240Q409 240 409 226V176" />
          </svg>
        </button>
        <button type="button" class="icon-btn" aria-label="Kamera">
          <svg class="camera" viewBox="654 152 123 112" aria-hidden="true">
            <path fill="none" stroke="currentColor" stroke-width="11" d="M660 177Q660 171 666 171H690L702 158H728L742 171H765Q771 171 771 177V252Q771 258 765 258H666Q660 258 660 252z" />
            <circle cx="716" cy="213" r="22" fill="none" stroke="currentColor" stroke-width="11" />
          </svg>
        </button>
      </div>
      <button type="button" class="mic" aria-label="Pesan suara">
        <svg viewBox="988 150 87 117" aria-hidden="true">
          <rect x="1013" y="150" width="37" height="75" rx="18" fill="currentColor" />
          <path fill="none" stroke="currentColor" stroke-width="11" stroke-linecap="round" d="M994 212Q998 245 1031 245Q1065 245 1069 212M1031 245V261" />
        </svg>
      </button>
    </form>
  </main>
</template>

<style>
body {
  margin: 0;
  background: #0b1014;
}
</style>

<style scoped>
.app {
  position: relative;
  display: flex;
  flex-direction: column;
  min-height: 100vh;
  overflow: hidden;
  background: #0b1014;
  color: #f4f7f8;
  font-family: Roboto, "Noto Sans", sans-serif;
}

h1, h2, p {
  margin: 0;
  font-weight: 400;
}

svg {
  display: block;
  flex: none;
}

button {
  border: 0;
  padding: 0;
  background: none;
  color: inherit;
  font: inherit;
}

.wallpaper {
  position: absolute;
  inset: 0;
  width: 100%;
  height: 100%;
}

.ink {
  fill: none;
  stroke: #1f2528;
  stroke-width: 2;
  stroke-linecap: round;
  stroke-linejoin: round;
  vector-effect: non-scaling-stroke;
}

.ink-solid {
  fill: #1f2528;
  font-size: 15px;
  font-weight: 500;
}

.ink-open {
  fill: none;
  stroke: #1f2528;
  stroke-width: 2;
  font-size: 36px;
  font-weight: 700;
}

.top {
  position: relative;
  border-bottom: 1px solid #181e21;
  background: #0b1014;
}

.status {
  display: flex;
  align-items: center;
  height: 44px;
  padding: 22px 56px 0 51px;
  color: #e6e8e8;
}

.clock {
  width: 75px;
  font-size: 27px;
  font-weight: 500;
  line-height: 32px;
}

.status-left {
  display: flex;
  gap: 9px;
}

.glyph {
  width: 28px;
  height: 28px;
  overflow: visible;
}

.dim {
  opacity: 0.7;
}

.solid {
  fill: currentColor;
}

.line5, .line7, .line9 {
  fill: none;
  stroke: currentColor;
}

.line5 {
  stroke-width: 5;
}

.line7 {
  stroke-width: 7;
}

.line9 {
  stroke-width: 9;
}

.status-right {
  display: flex;
  align-items: center;
  gap: 9px;
  margin-left: auto;
}

.signal {
  width: 36px;
  height: 25px;
}

.wifi {
  width: 35px;
  height: 27px;
}

.battery {
  width: 52px;
  height: 24px;
}

.bar {
  display: flex;
  align-items: center;
  height: 117px;
  margin-bottom: -2px;
  padding-right: 40px;
  padding-left: 32px;
}

.icon-btn {
  display: flex;
  flex: none;
  align-items: center;
  justify-content: center;
}

.back svg {
  width: 34px;
  height: 34px;
}

.avatar {
  display: flex;
  flex: none;
  align-items: center;
  justify-content: center;
  width: 73px;
  height: 73px;
  margin-left: 40px;
  border-radius: 50%;
  background: #321520;
}

.avatar svg {
  width: 24px;
  height: 24px;
  fill: #fd9aa6;
}

.who {
  flex: 1;
  min-width: 0;
  margin-left: 24px;
}

.who h1 {
  font-size: 34px;
  line-height: 40px;
  white-space: nowrap;
}

.who p {
  font-size: 25px;
  line-height: 36px;
}

.video svg {
  width: 43px;
  height: 34px;
}

.call {
  margin-left: 57px;
}

.call svg {
  width: 38px;
  height: 38px;
}

.more {
  margin-left: 62px;
}

.more svg {
  width: 10px;
  height: 34px;
  fill: currentColor;
}

.chat {
  position: relative;
  display: flex;
  flex-direction: column;
  padding: 19px 35px 0;
}

.day {
  align-self: center;
  padding: 12px 18px 10px;
  border-radius: 16px;
  background: #12181b;
  color: #8c9295;
  font-size: 25px;
  line-height: 31px;
}

.notice {
  margin: 23px 44px 22px;
  padding: 13px 34px 12px;
  border-radius: 16px;
  background: #12181b;
  color: #fbd285;
  font-size: 26px;
  line-height: 31px;
  text-align: center;
}

.unbroken {
  white-space: nowrap;
}

.lock {
  display: inline-block;
  width: 18px;
  height: 23px;
  margin-right: 4px;
  vertical-align: -2px;
}

.bubble {
  position: relative;
  display: grid;
  padding: 13px 18px 7px 20px;
  border-radius: 22px;
}

.bubble + .bubble {
  margin-top: 21px;
}

.bubble.in + .bubble:not(.tailed) {
  margin-top: 4px;
}

.bubble.out {
  margin-left: 81px;
  padding-top: 14px;
  background: #144d37;
}

.bubble.in {
  align-self: flex-start;
  grid-template-columns: auto auto;
  gap: 27px;
  background: #20272a;
}

.out.tailed {
  border-top-right-radius: 0;
}

.in.tailed {
  border-top-left-radius: 0;
}

.tail {
  position: absolute;
  top: 0;
  left: 100%;
  width: 15px;
  height: 22px;
  fill: #144d37;
}

.in .tail {
  right: 100%;
  left: auto;
  fill: #20272a;
  transform: scaleX(-1);
}

.text {
  margin-bottom: 9px;
  font-size: 33px;
  line-height: 38px;
}

.out .text {
  grid-area: 1 / 1;
  max-width: 570px;
}

.meta {
  display: flex;
  align-items: center;
  align-self: end;
  gap: 8px;
  color: #9ba1a3;
  font-size: 25px;
  line-height: 28px;
}

.out .meta {
  grid-area: 1 / 1;
  justify-self: end;
  color: #92afa4;
}

.ticks {
  width: 33px;
  height: 22px;
}

.ticks path {
  fill: none;
  stroke: #53bdeb;
  stroke-width: 9;
}

.bubble.call-card {
  align-self: flex-end;
  margin-left: 0;
  padding: 8px;
}

.call-inner {
  display: flex;
  align-items: flex-start;
  gap: 16px;
  padding: 20px 17px 18px 16px;
  border-radius: 16px;
  background: #144233;
}

.call-icon {
  display: flex;
  flex: none;
  align-items: center;
  justify-content: center;
  width: 82px;
  height: 82px;
  border-radius: 50%;
  background: #2d584a;
  color: #90989c;
}

.call-icon svg {
  width: 31px;
  height: 31px;
}

.call-info h2 {
  font-size: 29px;
  font-weight: 700;
  line-height: 34px;
}

.call-row {
  display: flex;
  align-items: flex-end;
  justify-content: space-between;
  height: 51px;
  color: #8fa99f;
}

.call-row p {
  align-self: flex-start;
  padding-top: 5px;
  font-size: 29px;
  line-height: 34px;
}

.call-row time {
  font-size: 25px;
  line-height: 28px;
}

.composer {
  position: relative;
  display: flex;
  gap: 10px;
  margin-top: auto;
  padding: 0 9px 10px 10px;
}

.field {
  display: flex;
  flex: 1;
  align-items: center;
  min-width: 0;
  height: 95px;
  padding: 0 27px 0 23px;
  border-radius: 48px;
  background: #20272a;
  color: #8d979b;
}

.field input {
  flex: 1;
  min-width: 0;
  margin: 2px 24px 0;
  padding: 0;
  border: 0;
  outline: 0;
  background: none;
  color: #f4f7f8;
  font: 37px/44px Roboto, "Noto Sans", sans-serif;
}

.field input::placeholder {
  color: #8b9498;
  opacity: 1;
}

.sticker {
  width: 41px;
  height: 41px;
}

.clip {
  width: 27px;
  height: 41px;
  margin-right: 64px;
}

.camera {
  width: 41px;
  height: 37px;
}

.mic {
  display: flex;
  flex: none;
  align-items: center;
  justify-content: center;
  width: 95px;
  height: 95px;
  border-radius: 50%;
  background: #23c063;
  color: #0b1014;
}

.mic svg {
  width: 29px;
  height: 39px;
}
</style>
